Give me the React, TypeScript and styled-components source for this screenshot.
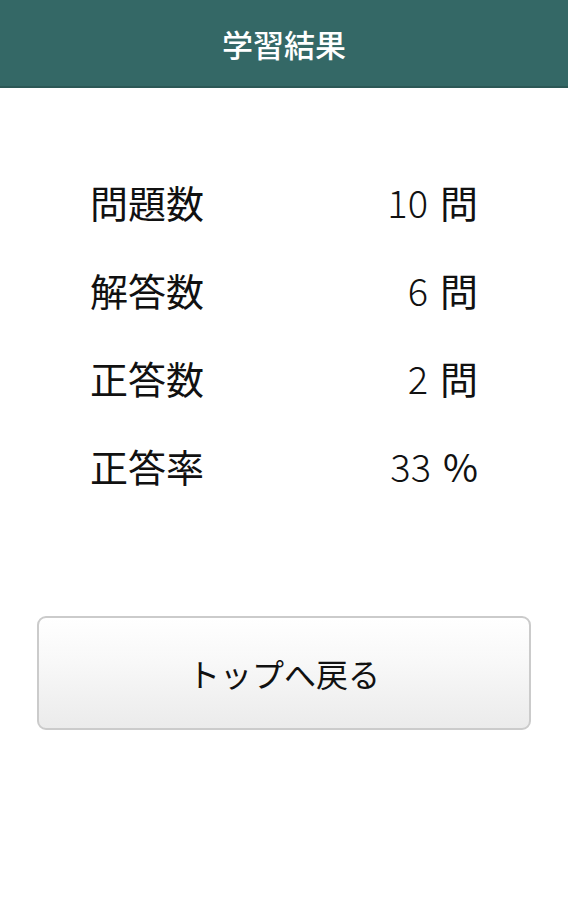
import styled, { createGlobalStyle } from 'styled-components';

const GlobalStyle = createGlobalStyle`
  body {
    margin: 0;
    background: #ffffff;
    font-family: "Noto Sans CJK JP", "Noto Sans", sans-serif;
  }
`;

const results = [
  { label: '問題数', value: '10', unit: '問' },
  { label: '解答数', value: '6', unit: '問' },
  { label: '正答数', value: '2', unit: '問' },
  { label: '正答率', value: '33', unit: '%' },
];

const S = {
  Page: styled.div`
    width: 568px;
    min-height: 900px;
    background: #ffffff;
  `,
  Header: styled.header`
    height: 86px;
    background: #346866;
    border-bottom: 2px solid #2c5856;
    display: flex;
    align-items: center;
    justify-content: center;
  `,
  Title: styled.h1`
    margin: 0;
    color: #ffffff;
    font-size: 31px;
    font-weight: 500;
  `,
  ResultList: styled.dl`
    margin: 0;
    padding: 90px 90px 0 90px;
    display: flex;
    flex-direction: column;
    gap: 40px;
  `,
  Row: styled.div`
    display: flex;
    justify-content: space-between;
    align-items: center;
    height: 48px;
  `,
  Label: styled.dt`
    font-size: 38px;
    color: #111111;
    line-height: 48px;
  `,
  Value: styled.dd`
    margin: 0;
    font-size: 38px;
    color: #111111;
    line-height: 48px;
    display: flex;
    gap: 12px;
  `,
  Number: styled.span`
    font-weight: 300;
  `,
  ButtonArea: styled.div`
    padding: 126px 37px 0 37px;
  `,
  TopButton: styled.button`
    width: 100%;
    height: 114px;
    border: 2px solid #cbcbcb;
    border-radius: 9px;
    background: linear-gradient(#ffffff, #f8f8f8 40%, #ebebeb);
    font-family: "Noto Sans CJK JP", "Noto Sans", sans-serif;
    font-size: 32px;
    color: #111111;
    cursor: pointer;
  `,
};

function App() {
  return (
    <S.Page>
      <GlobalStyle />
      <S.Header>
        <S.Title>学習結果</S.Title>
      </S.Header>
      <S.ResultList>
        {results.map((r) => (
          <S.Row key={r.label}>
            <S.Label>{r.label}</S.Label>
            <S.Value>
              <S.Number>{r.value}</S.Number>
              <span>{r.unit}</span>
            </S.Value>
          </S.Row>
        ))}
      </S.ResultList>
      <S.ButtonArea>
        <S.TopButton>トップへ戻る</S.TopButton>
      </S.ButtonArea>
    </S.Page>
  );
}

export default App;
